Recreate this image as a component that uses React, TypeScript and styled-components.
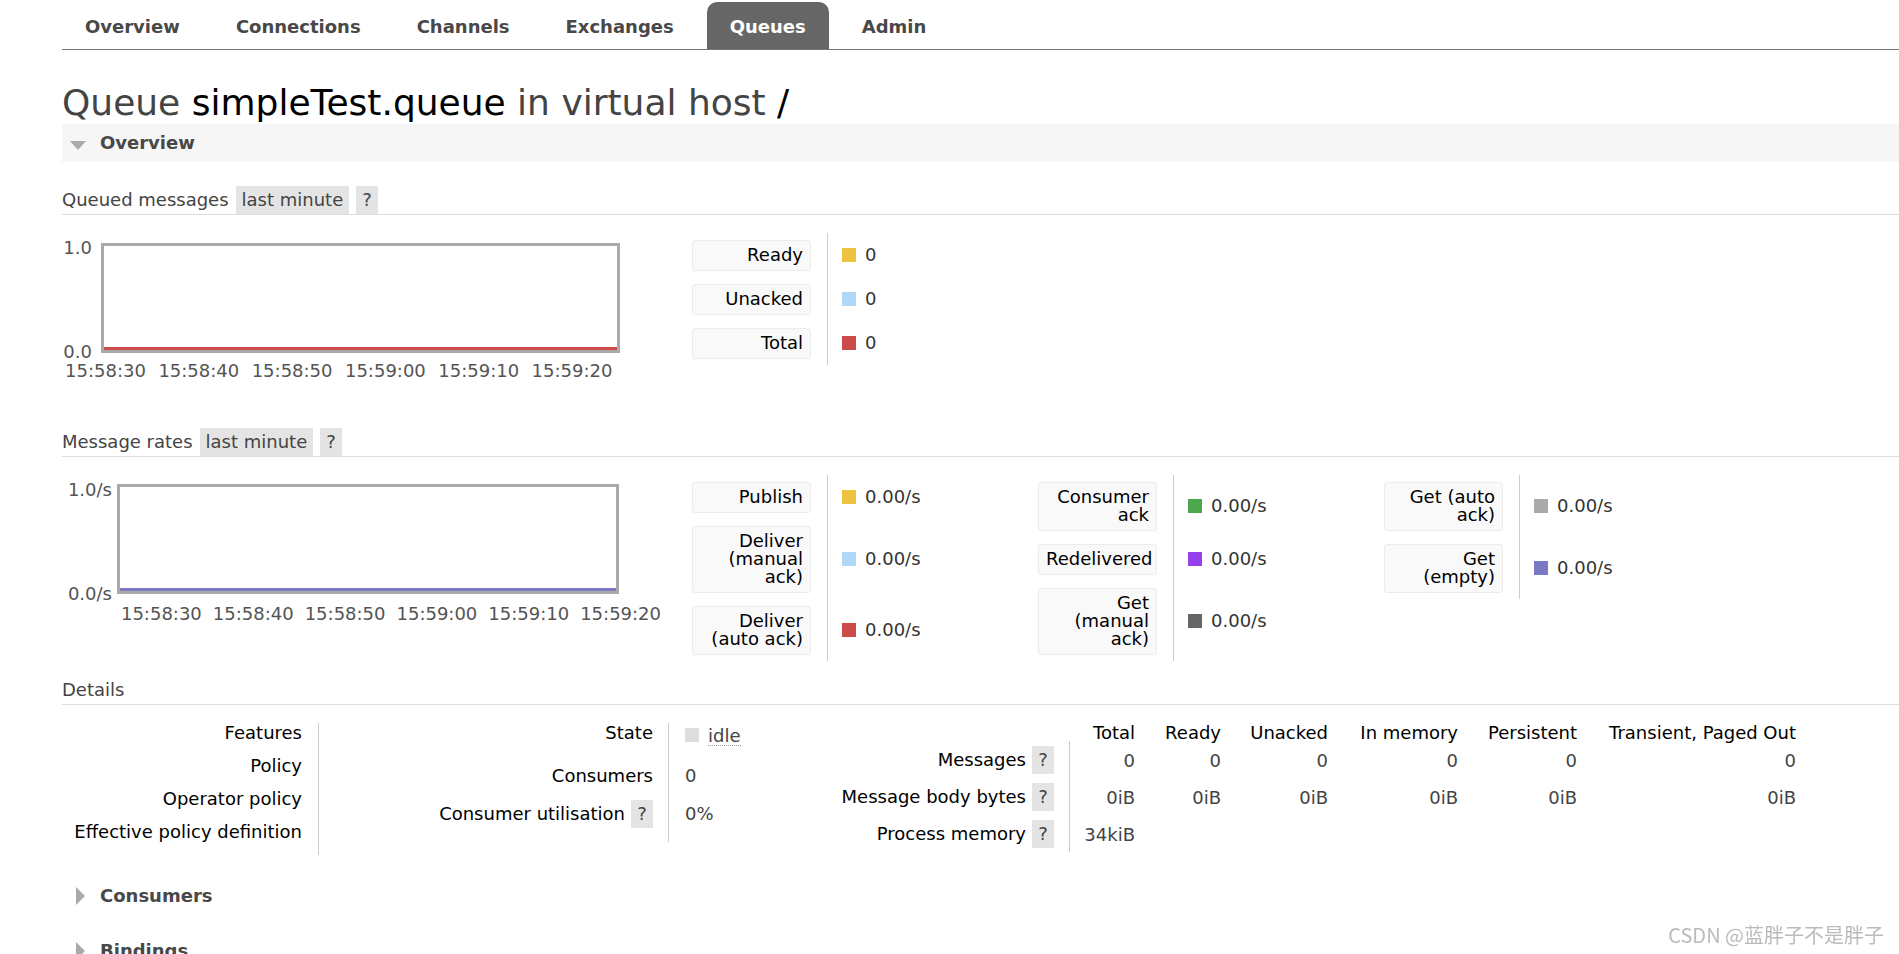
import React from 'react';
import styled, {createGlobalStyle} from 'styled-components';

const GlobalStyle = createGlobalStyle`
    html, body {
        margin: 0;
        padding: 0;
        overflow: hidden;
        background: #fff;
    }

    body {
        font-family: 'DejaVu Sans', Verdana, sans-serif;
        font-size: 18px;
        line-height: 18px;
        color: #444;
    }

    * {
        box-sizing: border-box;
    }
`;

const tabs = ['Overview', 'Connections', 'Channels', 'Exchanges', 'Queues', 'Admin'];

const times = ['15:58:30', '15:58:40', '15:58:50', '15:59:00', '15:59:10', '15:59:20'];

type LegendItem = {
    label: string[],
    color: string,
    value: string,
};

const queuedLegend: LegendItem[] = [
    {label: ['Ready'], color: '#edc240', value: '0'},
    {label: ['Unacked'], color: '#afd8f8', value: '0'},
    {label: ['Total'], color: '#cb4b4b', value: '0'},
];

const rateLegends: LegendItem[][] = [
    [
        {label: ['Publish'], color: '#edc240', value: '0.00/s'},
        {label: ['Deliver', '(manual', 'ack)'], color: '#afd8f8', value: '0.00/s'},
        {label: ['Deliver', '(auto ack)'], color: '#cb4b4b', value: '0.00/s'},
    ],
    [
        {label: ['Consumer', 'ack'], color: '#4da74d', value: '0.00/s'},
        {label: ['Redelivered'], color: '#9440ed', value: '0.00/s'},
        {label: ['Get', '(manual', 'ack)'], color: '#666666', value: '0.00/s'},
    ],
    [
        {label: ['Get (auto', 'ack)'], color: '#aaaaaa', value: '0.00/s'},
        {label: ['Get', '(empty)'], color: '#7c79c3', value: '0.00/s'},
    ],
];

type ChartSpec = {
    height: number,
    box: {x: number, y: number, w: number, h: number},
    labelRight: number,
    top: {text: string, y: number},
    bottom: {text: string, y: number},
    line: {y: number, x1: number, x2: number, color: string},
    ticks: {x0: number, step: number, y: number},
};

const queuedChart: ChartSpec = {
    height: 150,
    box: {x: 40.5, y: 11.5, w: 516, h: 107},
    labelRight: 30,
    top: {text: '1.0', y: 21},
    bottom: {text: '0.0', y: 125},
    line: {y: 115.5, x1: 42, x2: 555, color: '#cb4b4b'},
    ticks: {x0: 43.5, step: 93.3, y: 144},
};

const ratesChart: ChartSpec = {
    height: 152,
    box: {x: 56.5, y: 10.5, w: 499, h: 107},
    labelRight: 50,
    top: {text: '1.0/s', y: 21},
    bottom: {text: '0.0/s', y: 125},
    line: {y: 114.5, x1: 58, x2: 554, color: '#7c79c3'},
    ticks: {x0: 99.4, step: 91.84, y: 144.5},
};

const msgColumns = ['Total', 'Ready', 'Unacked', 'In memory', 'Persistent', 'Transient, Paged Out'];

const msgRows = [
    {label: 'Messages', values: ['0', '0', '0', '0', '0', '0']},
    {label: 'Message body bytes', values: ['0iB', '0iB', '0iB', '0iB', '0iB', '0iB']},
    {label: 'Process memory', values: ['34kiB', '', '', '', '', '']},
];

function Chart({spec}: {spec: ChartSpec}) {
    const {box, line, ticks} = spec;
    return (
        <ChartSvg
            width={630}
            height={spec.height}
            viewBox={`0 0 630 ${spec.height}`}
        >
            <rect
                x={box.x}
                y={box.y}
                width={box.w}
                height={box.h}
                fill='#fff'
                stroke='#aaa'
                strokeWidth={3}
            />
            <line
                x1={line.x1}
                x2={line.x2}
                y1={line.y}
                y2={line.y}
                stroke={line.color}
                strokeWidth={3}
            />
            <text
                x={spec.labelRight}
                y={spec.top.y}
                textAnchor='end'
            >
                {spec.top.text}
            </text>
            <text
                x={spec.labelRight}
                y={spec.bottom.y}
                textAnchor='end'
            >
                {spec.bottom.text}
            </text>
            {times.map((t, i) => (
                <text
                    key={t}
                    x={ticks.x0 + (i * ticks.step)}
                    y={ticks.y}
                    textAnchor='middle'
                >
                    {t}
                </text>
            ))}
        </ChartSvg>
    );
}

function Legend({items}: {items: LegendItem[]}) {
    return (
        <LegendGrid>
            {items.map((item) => (
                <React.Fragment key={item.label.join(' ')}>
                    <LegendLabel>
                        {item.label.map((line, i) => (
                            <React.Fragment key={line}>
                                {i > 0 && <br/>}
                                {line}
                            </React.Fragment>
                        ))}
                    </LegendLabel>
                    <LegendValue>
                        <Swatch $color={item.color}/>
                        {item.value}
                    </LegendValue>
                </React.Fragment>
            ))}
        </LegendGrid>
    );
}

function SubHeader({title, mt, range}: {title: string, mt: number, range?: boolean}) {
    return (
        <SubHeaderRow $mt={mt}>
            {title}
            {range &&
                <>
                    <Pill>{'last minute'}</Pill>
                    <Pill>{'?'}</Pill>
                </>
            }
        </SubHeaderRow>
    );
}

export default function App() {
    return (
        <>
            <GlobalStyle/>
            <Page>
                <Tabs>
                    {tabs.map((t) => (
                        <Tab
                            key={t}
                            $active={t === 'Queues'}
                        >
                            {t}
                        </Tab>
                    ))}
                </Tabs>

                <Title>
                    {'Queue '}<b>{'simpleTest.queue'}</b>{' in virtual host '}<b>{'/'}</b>
                </Title>

                <Toggle $open={true}>
                    <Arrow $open={true}/>
                    {'Overview'}
                </Toggle>

                <SubHeader
                    title='Queued messages'
                    mt={24}
                    range={true}
                />
                <ChartRow>
                    <Chart spec={queuedChart}/>
                    <Legend items={queuedLegend}/>
                </ChartRow>

                <SubHeader
                    title='Message rates'
                    mt={45}
                    range={true}
                />
                <ChartRow>
                    <Chart spec={ratesChart}/>
                    {rateLegends.map((items) => (
                        <Legend
                            key={items[0].label[0]}
                            items={items}
                        />
                    ))}
                </ChartRow>

                <SubHeader
                    title='Details'
                    mt={15}
                />
                <DetailsBody>
                    <FactGrid $cols='256px 94px'>
                        {['Features', 'Policy', 'Operator policy', 'Effective policy definition'].map((l) => (
                            <React.Fragment key={l}>
                                <FactLabel $pr={16}>{l}</FactLabel>
                                <FactValue/>
                            </React.Fragment>
                        ))}
                    </FactGrid>

                    <FactGrid $cols='256px 162px'>
                        <FactLabel>{'State'}</FactLabel>
                        <FactValue>
                            <StateChip>
                                <StateBox/>
                                <Abbr>{'idle'}</Abbr>
                            </StateChip>
                        </FactValue>
                        <FactLabel>{'Consumers'}</FactLabel>
                        <FactValue>{'0'}</FactValue>
                        <FactLabel>
                            <LabelInner>
                                {'Consumer utilisation'}
                                <Help>{'?'}</Help>
                            </LabelInner>
                        </FactLabel>
                        <FactValue>{'0%'}</FactValue>
                    </FactGrid>

                    <MsgGrid>
                        <span/>
                        {msgColumns.map((c) => (
                            <ColHead key={c}>{c}</ColHead>
                        ))}
                        {msgRows.map((row) => (
                            <React.Fragment key={row.label}>
                                <RowHead>
                                    {row.label}
                                    <Help>{'?'}</Help>
                                </RowHead>
                                {row.values.map((v, i) => (
                                    <Num
                                        key={msgColumns[i]}
                                        $first={i === 0}
                                    >
                                        {v}
                                    </Num>
                                ))}
                            </React.Fragment>
                        ))}
                    </MsgGrid>
                </DetailsBody>

                <Toggle $mt={22}>
                    <Arrow/>
                    {'Consumers'}
                </Toggle>
                <Toggle $mt={17}>
                    <Arrow/>
                    {'Bindings'}
                </Toggle>
            </Page>
            <Watermark>{'CSDN @蓝胖子不是胖子'}</Watermark>
        </>
    );
}

const Page = styled.div`
    padding-left: 62px;
`;

const Tabs = styled.ul`
    display: flex;
    align-items: flex-end;
    list-style: none;
    margin: 2px 0 0;
    padding: 0;
    border-bottom: 1px solid #777;
`;

const Tab = styled.li<{ $active?: boolean }>`
    display: flex;
    align-items: center;
    height: 47px;
    padding: 3px 23px 0;
    margin-right: 10px;
    border-radius: 10px 10px 0 0;
    font-weight: bold;
    color: ${({$active}) => ($active ? '#fff' : '#484848')};
    background: ${({$active}) => ($active ? '#666' : 'transparent')};
`;

const Title = styled.h1`
    margin: 32px 0 0;
    font-size: 36px;
    line-height: 42px;
    font-weight: normal;
    color: #444;

    b {
        font-weight: normal;
        color: #000;
    }
`;

const Toggle = styled.div<{ $open?: boolean, $mt?: number }>`
    display: flex;
    align-items: center;
    height: 38px;
    margin-top: ${({$mt}) => $mt || 0}px;
    background: ${({$open}) => ($open ? '#f6f6f6' : 'transparent')};
    font-weight: bold;
    color: #484848;
`;

const Arrow = styled.span<{ $open?: boolean }>`
    width: 0;
    height: 0;
    ${({$open}) => ($open ? `
        margin: 4px 14px 0 8px;
        border-left: 8.5px solid transparent;
        border-right: 8.5px solid transparent;
        border-top: 9px solid #aaa;
    ` : `
        margin: 0 15px 0 14px;
        border-top: 9px solid transparent;
        border-bottom: 9px solid transparent;
        border-left: 9px solid #aaa;
    `)}
`;

const SubHeaderRow = styled.div<{ $mt: number }>`
    display: flex;
    align-items: stretch;
    height: 29px;
    line-height: 28px;
    margin-top: ${({$mt}) => $mt}px;
    border-bottom: 1px solid #ddd;
    color: #444;
`;

const Pill = styled.span`
    margin-left: 7px;
    padding: 0 6px;
    background: #e4e4e4;
    color: #444;
`;

const ChartRow = styled.div`
    display: flex;
    align-items: flex-start;
    margin-top: 18px;
`;

const ChartSvg = styled.svg`
    display: block;
    flex: none;
    font-family: 'DejaVu Sans', Verdana, sans-serif;
    font-size: 18px;

    text {
        fill: #545454;
    }
`;

const LegendGrid = styled.div`
    display: grid;
    grid-template-columns: 135px auto;
    align-content: start;
    flex: none;
    width: 346px;
`;

const LegendLabel = styled.div`
    margin: 6.5px 16px 6.5px 0;
    padding: 5.5px 7px;
    border: 1px solid #ececec;
    border-radius: 3px;
    background: #f9f9f9;
    color: #000;
    text-align: right;
    white-space: nowrap;
`;

const LegendValue = styled.div`
    display: flex;
    align-items: center;
    gap: 9px;
    padding-left: 14px;
    border-left: 1px solid #ccc;
    color: #333;
`;

const Swatch = styled.span<{ $color: string }>`
    width: 14px;
    height: 14px;
    background: ${({$color}) => $color};
`;

const DetailsBody = styled.div`
    display: flex;
    align-items: flex-start;
    margin-top: 18px;
`;

const FactGrid = styled.div<{ $cols: string }>`
    display: grid;
    grid-template-columns: ${({$cols}) => $cols};
    flex: none;
`;

const FactLabel = styled.div<{ $pr?: number }>`
    display: flex;
    justify-content: flex-end;
    align-items: flex-start;
    padding: 1px ${({$pr}) => $pr || 15}px 14px 0;
    color: #000;
    text-align: right;
    white-space: nowrap;
`;

const LabelInner = styled.span`
    display: flex;
    align-items: center;
    gap: 6px;
`;

const FactValue = styled.div`
    display: flex;
    align-items: center;
    padding: 1px 0 14px 16px;
    border-left: 1px solid #ccc;
    color: #444;
`;

const StateChip = styled.span`
    display: flex;
    align-items: flex-start;
    gap: 9px;
    height: 28px;
    padding-top: 3px;
`;

const StateBox = styled.span`
    width: 14px;
    height: 14px;
    margin-top: 1px;
    background: #ddd;
`;

const Abbr = styled.span`
    border-bottom: 1px dotted #999;
    color: #444;
`;

const Help = styled.span`
    width: 22px;
    height: 28px;
    line-height: 28px;
    text-align: center;
    background: #e4e4e4;
    color: #444;
`;

const MsgGrid = styled.div`
    display: grid;
    grid-template-columns: 239px 66px 86px 107px 130px 119px 219px;
    grid-template-rows: 18px repeat(3, 37px);
    flex: none;
`;

const ColHead = styled.div`
    padding-top: 1px;
    text-align: right;
    color: #000;
    white-space: nowrap;
`;

const RowHead = styled.div`
    display: flex;
    justify-content: flex-end;
    align-items: center;
    gap: 6px;
    padding-right: 15px;
    color: #000;
    white-space: nowrap;
`;

const Num = styled.div<{ $first?: boolean }>`
    display: flex;
    justify-content: flex-end;
    align-items: center;
    padding-top: 2px;
    border-left: ${({$first}) => ($first ? '1px solid #ccc' : 'none')};
    color: #444;
`;

const Watermark = styled.div`
    position: fixed;
    right: 15px;
    bottom: 7px;
    font-family: 'Noto Sans CJK SC', sans-serif;
    font-size: 20px;
    line-height: 24px;
    color: #bbb;
`;
